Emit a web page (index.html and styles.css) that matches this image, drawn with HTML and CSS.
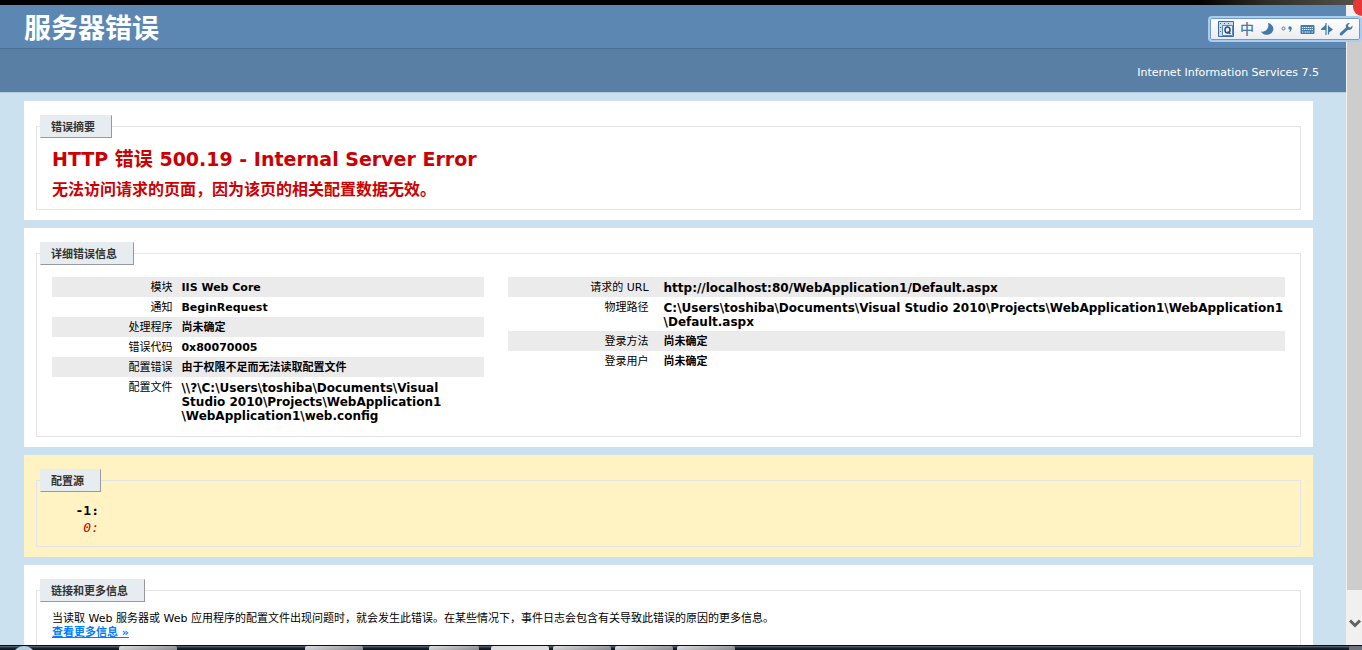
FILE: index.html
```html
<!DOCTYPE html>
<html lang="zh-CN">
<head>
<meta charset="utf-8">
<title>IIS 7.5 详细错误 - 500.19</title>
<link rel="stylesheet" href="styles.css">
</head>
<body>
<div class="window-edge"></div>
<div class="viewport">
  <div class="page">
    <header class="header"><h1>服务器错误</h1></header>
    <div class="server-version">Internet Information Services 7.5</div>
    <main class="content">
      <section class="card">
        <fieldset class="summary">
          <legend>错误摘要</legend>
          <h2>HTTP 错误 500.19 - Internal Server Error</h2>
          <h3>无法访问请求的页面，因为该页的相关配置数据无效。</h3>
        </fieldset>
      </section>
      <section class="card">
        <fieldset class="details">
          <legend>详细错误信息</legend>
          <div class="columns">
            <table class="module">
              <tr><th scope="row">模块</th><td>IIS Web Core</td></tr>
              <tr><th scope="row">通知</th><td>BeginRequest</td></tr>
              <tr><th scope="row">处理程序</th><td>尚未确定</td></tr>
              <tr><th scope="row">错误代码</th><td>0x80070005</td></tr>
              <tr><th scope="row">配置错误</th><td>由于权限不足而无法读取配置文件</td></tr>
              <tr><th scope="row">配置文件</th><td class="path">\\?\C:\Users\toshiba\Documents\Visual Studio 2010\Projects\WebApplication1<wbr>\WebApplication1\web.config</td></tr>
            </table>
            <table class="request">
              <tr><th scope="row">请求的 URL</th><td class="path">http://localhost:80/WebApplication1/Default.aspx</td></tr>
              <tr><th scope="row">物理路径</th><td class="path">C:\Users\toshiba\Documents\Visual Studio 2010\Projects\WebApplication1\WebApplication1<wbr>\Default.aspx</td></tr>
              <tr><th scope="row">登录方法</th><td>尚未确定</td></tr>
              <tr><th scope="row">登录用户</th><td>尚未确定</td></tr>
            </table>
          </div>
        </fieldset>
      </section>
      <section class="card source">
        <fieldset>
          <legend>配置源</legend>
          <pre><b>   -1: </b>
<i>    0: </i></pre>
        </fieldset>
      </section>
      <section class="card">
        <fieldset class="more">
          <legend>链接和更多信息</legend>
          <p>当读取 Web 服务器或 Web 应用程序的配置文件出现问题时，就会发生此错误。在某些情况下，事件日志会包含有关导致此错误的原因的更多信息。</p>
          <a href="#">查看更多信息 »</a>
        </fieldset>
      </section>
    </main>
  </div>
  <div class="scrollbar">
    <div class="thumb"></div>
    <button class="scroll-down" type="button" aria-label="向下滚动">
      <svg width="12" height="10" viewBox="0 0 12 10"><path d="M1 1.500 6 6.500 11 1.500" fill="none" stroke="#606060" stroke-width="3"/></svg>
    </button>
  </div>
</div>
<div class="taskbar">
  <i class="orb"></i><i class="task t1"></i><i class="task t2"></i><i class="task t3"></i><i class="task t4 active"></i><i class="task t5"></i><i class="task t6"></i><i class="task t7"></i><i class="desktop"></i>
</div>
<div class="badge"></div>
<div class="ime">
  <svg width="16" height="16" viewBox="0 0 16 16"><path d="M.5.5h15v15H.5z" fill="#c9dcf0" stroke="#3c6c9f"/><path d="M2 2.500h1M6 2.500h1M10 2.500h1M2.500 6v1M2.500 10v1" stroke="#3c6c9f"/><path d="M4.500 4.500h10v10h-10z" fill="#edf4fb" stroke="#5b87b8"/><ellipse cx="9.500" cy="9" rx="2.500" ry="3" fill="none" stroke="#234f8c" stroke-width="1.500"/><path d="m9.500 10.500 3 2.500" stroke="#234f8c" stroke-width="1.500"/></svg>
  <span class="mode">中</span>
  <svg width="14" height="14" viewBox="0 0 14 14"><path d="M8 1c5 1 7 6 4 9.500C9 14 3 13.500 1 9.500 6 10.500 9.500 6 8 1z" fill="#447aa8"/></svg>
  <svg width="14" height="14" viewBox="0 0 14 14"><circle cx="3.500" cy="6.500" r="1.500" fill="none" stroke="#447aa8"/><circle cx="10" cy="6" r="1.700" fill="#447aa8"/><path d="M11.500 6c.3 2-.5 3.500-2 4l-.3-.7c1-.5 1.300-1.500 1-2.500z" fill="#447aa8"/></svg>
  <svg width="15" height="14" viewBox="0 0 15 14"><rect x=".5" y="3" width="14" height="9" rx="1" fill="#447aa8"/><path d="M2 5.500h11M2 7.500h11M4.500 10h6M2 10h1.500M11.500 10H13" stroke="#fff" stroke-dasharray="1.300 .7"/></svg>
  <svg width="12" height="14" viewBox="0 0 12 14"><path d="M5 1v12M7.500 3.500v9" stroke="#447aa8" stroke-width="1.200"/><path d="M5 2.500V8H0V7zM7.500 4l4.500 3.500-4.500 3.500z" fill="#447aa8"/></svg>
  <svg width="14" height="14" viewBox="0 0 14 14"><path d="m1 11 6-5.500c-.8-2.500 1-5 4-4.500L9 3l.5 2 2 .5 2-2c.5 3-2 5-4.500 4.200L3 13.200C1.500 14 0 12.500 1 11z" fill="#447aa8"/></svg>
</div>
</body>
</html>
```

FILE: styles.css
```css
* { box-sizing: border-box; }

body {
  margin: 0;
  height: 100vh;
  display: flex;
  flex-direction: column;
  overflow: hidden;
  background: #cbe1ef;
  color: #000;
  font: 11px/14px "DejaVu Sans", "Noto Sans CJK SC", sans-serif;
}

.window-edge {
  flex: none;
  height: 5px;
  background: linear-gradient(90deg, #000 88%, #2e2e28 93%, #55554c);
}

.viewport {
  flex: 1;
  min-height: 0;
  display: flex;
}

.page {
  flex: 1;
  min-width: 0;
  overflow: hidden;
}

.header {
  height: 44px;
  padding-left: 24px;
  background: #5c87b2;
  border-bottom: 1px solid #4a6f94;
}

h1 {
  margin: 0;
  color: #fff;
  font-size: 27px;
  line-height: 48px;
}

.server-version {
  height: 44px;
  padding-right: 27px;
  background: #5a7fa5;
  border-bottom: 1px solid #b5cadb;
  color: #fff;
  line-height: 48px;
  text-align: right;
}

.content {
  display: flex;
  flex-direction: column;
  gap: 8px;
  padding: 8px 33px 8px 24px;
}

.card {
  padding: 14px 12px 10px;
  background: #fff;
}

.source { background: #fff3c4; }

fieldset {
  min-width: 0;
  margin: 0;
  padding: 10px 15px;
  border: 1px solid #e4e4e7;
}

legend {
  margin-left: -12px;
  padding: 5px 16px 3px 10px;
  border: 1px solid #e7ecf0;
  border-right-color: #969a9e;
  border-bottom-color: #969a9e;
  background: #e7ecf0;
  color: #333;
  font-weight: bold;
  line-height: 13px;
}

.summary { padding: 7px 15px; }

h2,
h3 {
  margin: 0;
  color: #c00;
}

h2 {
  font-size: 19px;
  line-height: 28px;
}

h3 {
  margin-top: 5px;
  font-size: 16px;
  line-height: 24px;
}

.details { padding: 12px 15px 11px; }

.columns {
  display: flex;
  align-items: flex-start;
  justify-content: space-between;
}

table {
  table-layout: fixed;
  border-collapse: collapse;
}

.module { width: 35%; }
.request { width: 63%; }

tr:nth-child(odd) { background: #ebebeb; }

th,
td {
  padding: 4px 0 2px;
  vertical-align: top;
}

th {
  font-weight: normal;
  text-align: right;
}

.module th { width: 30%; padding-right: 9px; }
.request th { width: 20%; padding-right: 15px; }

td { font-weight: bold; }

.path { font-size: 12px; }

pre {
  margin: 0;
  font: 13px/17px "DejaVu Sans Mono", monospace;
}

pre i { color: #c00; }

.more { padding-bottom: 24px; }

p { margin: 0; }

a {
  color: #007eff;
  font-weight: bold;
}

.scrollbar {
  flex: none;
  width: 16px;
  display: flex;
  flex-direction: column;
  padding-left: 1px;
  background: #f0f0f0;
}

.thumb {
  flex: 1;
  margin-top: 16px;
  background: #cdcdcd;
}

.scroll-down {
  height: 55px;
  padding: 12px 0 0;
  border: 0;
  background: none;
}

.scroll-down svg { display: block; margin: 0 auto; }

.taskbar {
  flex: none;
  position: relative;
  height: 5px;
  overflow: hidden;
  border-top: 1px solid #071018;
  background: linear-gradient(#60717c, #1b2732 50%, #0b0e18);
}

.task,
.desktop,
.orb {
  position: absolute;
  top: 0;
  width: 58px;
  height: 8px;
  border-radius: 2px 2px 0 0;
  background: linear-gradient(170deg, #e0e2e3, #a3a8ad 50%, #687078);
}

.orb { left: 12px; width: 24px; height: 24px; border-radius: 50%; background: #b2cee0; }
.t1 { left: 119px; }
.t2 { left: 305px; }
.t3 { left: 429px; width: 50px; }
.t4 { left: 491px; }
.t5 { left: 553px; }
.t6 { left: 615px; }
.t7 { left: 677px; }
.active { background: #dcdcdf; }
.desktop { right: 0; width: 13px; background: #69747d; }

.badge {
  position: absolute;
  top: 0;
  right: 0;
  width: 9px;
  height: 16px;
  border-radius: 3px 0 0 9px;
  background: #e83737;
}

.ime {
  position: absolute;
  top: 16px;
  right: 0;
  height: 26px;
  display: flex;
  align-items: center;
  gap: 6px;
  padding: 0 7px 0 8px;
  border: 2px solid #a9cdee;
  border-radius: 4px;
  background: linear-gradient(#fff, #ececf0);
  box-shadow: inset 0 0 0 1px #7199c5;
}

.ime svg { flex: none; }

.mode {
  color: #447aa8;
  font-size: 14px;
  font-weight: 500;
  line-height: 20px;
}
```
